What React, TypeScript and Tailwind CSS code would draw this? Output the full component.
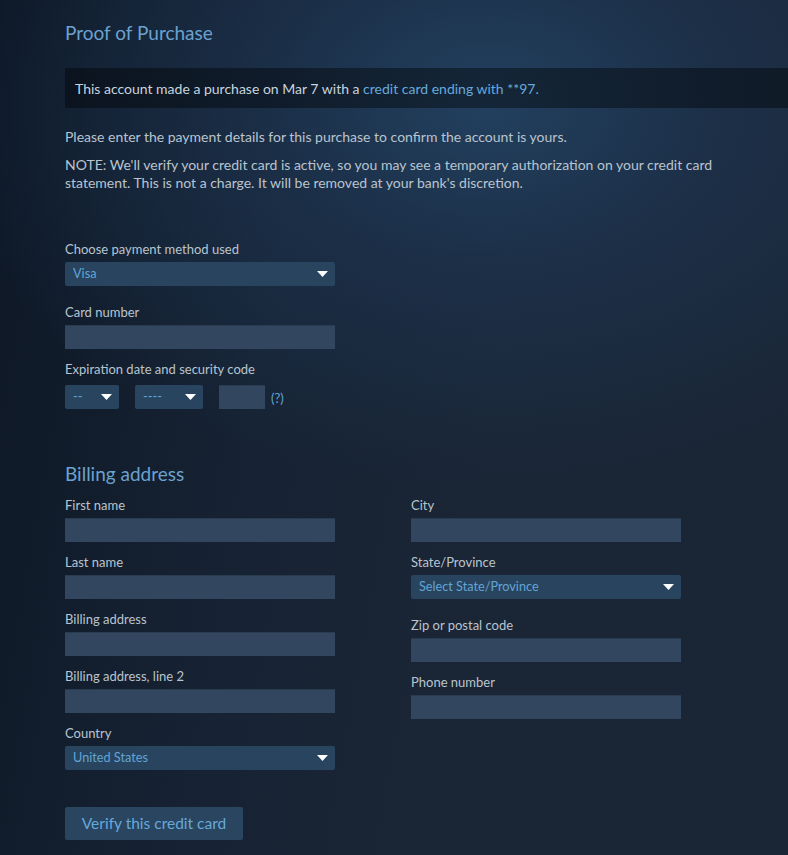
import { ReactNode } from "react";

const font = "font-['Lato','Liberation_Sans',sans-serif]";

function Label({ children }: { children: ReactNode }) {
  return <div className="h-[18px] text-[13px] leading-[18px] text-[#b9c4cf] mb-[4px]">{children}</div>;
}

function TextInput({ w = "w-[270px]", mb = "mb-[11px]" }: { w?: string; mb?: string }) {
  return <div className={`${w} ${mb} h-[24px] bg-[#32465f] border-t border-[#2a3a4f] border-b-[#4a5e76]`} />;
}

function Arrow() {
  return (
    <svg width="11" height="6" viewBox="0 0 11 6" className="shrink-0">
      <path d="M0 0h11L5.5 6z" fill="#ffffff" />
    </svg>
  );
}

function Select({ value, w = "w-[270px]", mb = "mb-[17px]" }: { value: string; w?: string; mb?: string }) {
  return (
    <div className={`${w} ${mb} h-[24px] bg-[#28445f] rounded-[2px] flex items-center justify-between pl-[8px] pr-[7px] text-[12.7px] text-[#63a4d4]`}>
      <span>{value}</span>
      <Arrow />
    </div>
  );
}

function Field({ label, select, mb }: { label: string; select?: string; mb?: string }) {
  return (
    <div>
      <Label>{label}</Label>
      {select ? <Select value={select} mb={mb} /> : <TextInput mb={mb} />}
    </div>
  );
}

export default function App() {
  return (
    <div
      className={`${font} w-[788px] h-[855px] overflow-hidden bg-[#1a2535] bg-[radial-gradient(ellipse_70%_45%_at_62%_12%,#22405f_0%,rgba(30,55,85,0.6)_40%,rgba(27,37,53,0)_100%),linear-gradient(100deg,#0d1725_0%,rgba(20,33,50,0.6)_35%,rgba(27,37,53,0)_60%)]`}
    >
      <div className="pl-[65px] pt-[22px]">
        <h2 className="text-[19px] leading-[22px] text-[#6ba2cf]">Proof of Purchase</h2>

        <div className="mt-[24px] w-[960px] h-[40px] bg-[rgba(0,0,0,0.4)] flex items-center pl-[10px] text-[14px] text-[#c6d4df]">
          This account made a purchase on Mar 7 with a&nbsp;
          <span className="text-[#66a9dc]">credit card ending with **97.</span>
        </div>

        <p className="mt-[20px] text-[14px] leading-[18px] text-[#b9c4cf]">
          Please enter the payment details for this purchase to confirm the account is yours.
        </p>
        <p className="mt-[10px] w-[690px] text-[14px] leading-[18px] text-[#b9c4cf]">
          NOTE: We'll verify your credit card is active, so you may see a temporary authorization on your credit card
          statement. This is not a charge. It will be removed at your bank's discretion.
        </p>

        <div className="mt-[48px]">
          <Field label="Choose payment method used" select="Visa" mb="mb-[17px]" />
          <Field label="Card number" mb="mb-[11px]" />
          <Label>Expiration date and security code</Label>
          <div className="flex items-center mt-[7px]">
            <Select value="--" w="w-[54px] mr-[16px]" mb="mb-0" />
            <Select value="----" w="w-[68px] mr-[16px]" mb="mb-0" />
            <TextInput w="w-[46px]" mb="mb-0" />
            <span className="ml-[6px] pt-[3px] text-[13px] text-[#63a4d4]">(?)</span>
          </div>
        </div>

        <h2 className="mt-[54px] text-[19px] leading-[22px] text-[#6ba2cf]">Billing address</h2>

        <div className="mt-[11px] flex gap-[76px]">
          <div className="w-[270px]">
            <Field label="First name" />
            <Field label="Last name" />
            <Field label="Billing address" />
            <Field label="Billing address, line 2" />
            <Field label="Country" select="United States" mb="mb-0" />
          </div>
          <div className="w-[270px]">
            <Field label="City" />
            <Field label="State/Province" select="Select State/Province" />
            <Field label="Zip or postal code" />
            <Field label="Phone number" />
          </div>
        </div>

        <button className="mt-[37px] w-[178px] h-[33px] bg-[#29455f] rounded-[2px] text-[15.5px] text-[#66a9dc] flex items-center justify-center">
          Verify this credit card
        </button>
      </div>
    </div>
  );
}
